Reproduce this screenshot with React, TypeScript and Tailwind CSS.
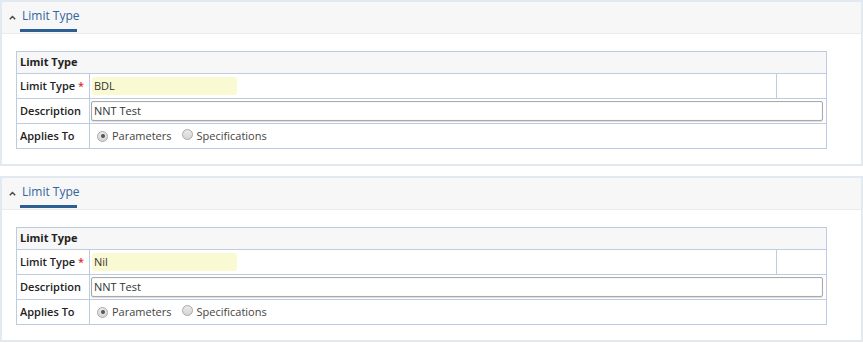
import React from "react";

function Radio({ checked }: { checked: boolean }) {
  return (
    <span className="relative inline-block w-[11px] h-[11px] rounded-full border border-[#a8a8a8] bg-gradient-to-b from-[#e9e9e9] to-[#d6d6d6] shrink-0">
      {checked && (
        <span className="absolute left-[2.5px] top-[2.5px] w-[4px] h-[4px] rounded-full bg-[#555]" />
      )}
    </span>
  );
}

function Panel({ value }: { value: string }) {
  return (
    <div className="border-2 border-[#e3e9f1] bg-white h-[166px] w-[863px]">
      <div className="h-[32px] bg-[#f7f7f7] border-b border-[#ebebeb] flex items-start">
        <div className="w-[19px] h-[30px] flex items-center justify-center pl-[2px]">
          <svg width="7" height="5" viewBox="0 0 7 5" className="mt-[1px]">
            <path d="M0.8 4.2 L3.5 1.5 L6.2 4.2" fill="none" stroke="#444" strokeWidth="1.4" />
          </svg>
        </div>
        <div className="flex flex-col">
          <div className="h-[27px] flex items-center text-[12px] text-[#34659c] px-[1px]">Limit Type</div>
          <div className="h-[3px] bg-[#2e5d92] w-[57px] -ml-[1px]" />
        </div>
      </div>
      <div className="pt-[17px] pl-[14px]">
        <div className="w-[811px] border border-[#bccde2] text-[11px] text-[#333]">
          <div className="h-[22px] bg-[#f7f7f7] border-b border-[#bccde2] flex items-center pl-[3px] font-bold text-[#222]">
            Limit Type
          </div>
          <div className="h-[25px] border-b border-[#bccde2] flex">
            <div className="w-[73px] border-r border-[#bccde2] flex items-center pl-[3px] font-semibold text-[#222]">
              Limit Type <span className="text-[#e0312d] ml-[3px]">*</span>
            </div>
            <div className="flex-1 border-r border-[#bccde2] flex items-center pl-[2px]">
              <div className="w-[145px] h-[18px] rounded-[3px] bg-[#fafad2] flex items-center pl-[2px] text-[#333]">
                {value}
              </div>
            </div>
            <div className="w-[49px]" />
          </div>
          <div className="h-[25px] border-b border-[#bccde2] flex">
            <div className="w-[73px] border-r border-[#bccde2] flex items-center pl-[3px] font-semibold text-[#222]">
              Description
            </div>
            <div className="flex-1 flex items-center pl-[1px] pr-[3px]">
              <div className="w-full h-[20px] rounded-[2px] border border-[#a9a9a9] shadow-[inset_0_0_1px_#ccc,0_1px_1px_#ddd] flex items-center pl-[2px] text-[#333]">
                NNT Test
              </div>
            </div>
          </div>
          <div className="h-[24px] flex">
            <div className="w-[73px] border-r border-[#bccde2] flex items-center pl-[3px] font-semibold text-[#222]">
              Applies To
            </div>
            <div className="flex-1 flex items-center pl-[7px] text-[#444]">
              <Radio checked />
              <span className="ml-[4px]">Parameters</span>
              <span className="ml-[10px]"><Radio checked={false} /></span>
              <span className="ml-[4px]">Specifications</span>
            </div>
          </div>
        </div>
      </div>
    </div>
  );
}

export default function App() {
  return (
    <div className="w-[863px] h-[343px] bg-white overflow-hidden" style={{ fontFamily: '"Open Sans", "Noto Sans", sans-serif' }}>
      <Panel value="BDL" />
      <div className="h-[10px]" />
      <Panel value="Nil" />
    </div>
  );
}
